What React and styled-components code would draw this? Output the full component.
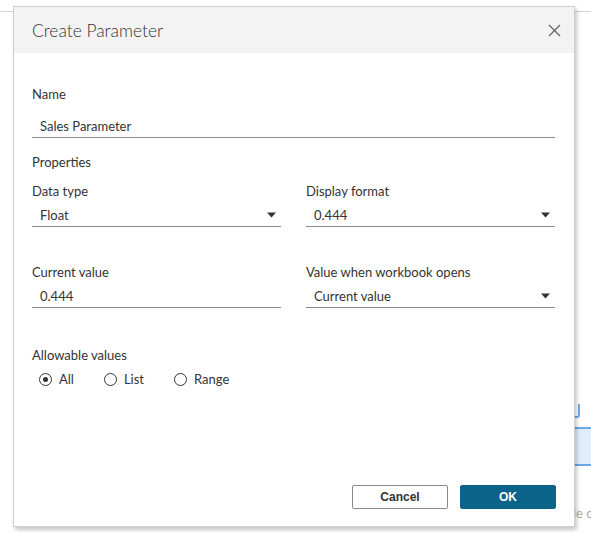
import React from 'react';
import styled, { createGlobalStyle } from 'styled-components';

const GlobalStyle = createGlobalStyle`
  html, body {
    margin: 0;
    padding: 0;
    background: #fff;
  }
  body {
    font-family: Lato, "Open Sans", sans-serif;
    color: #333;
  }
`;

const Page = styled.div`
  position: relative;
  width: 591px;
  height: 539px;
  overflow: hidden;
  background: #fff;
`;

// page content peeking out behind the modal
const TopRule = styled.div`
  height: 11px;
  border-bottom: 1px solid #d4d4d4;
`;

const BackHook = styled.div`
  position: absolute;
  left: 572px;
  top: 404px;
  width: 6px;
  height: 12px;
  border: 2px solid #6ea7e6;
  border-top: none;
  border-left: none;
  border-radius: 0 0 3px 0;
`;

const BackBox = styled.div`
  position: absolute;
  left: 560px;
  top: 427px;
  width: 60px;
  height: 35px;
  background: #e1ecfc;
  border: 2px solid #6ea7e6;
`;

const BackText = styled.div`
  position: absolute;
  left: 573px;
  top: 505px;
  font-size: 13px;
  color: #aaa;
  white-space: nowrap;
`;

const Dialog = styled.div`
  position: absolute;
  left: 13px;
  top: 6px;
  width: 560px;
  height: 519px;
  display: flex;
  flex-direction: column;
  background: #fff;
  border: 1px solid #cfcfcf;
  box-shadow: 2px 3px 4px rgba(0, 0, 0, 0.22);
`;

const Header = styled.div`
  height: 46px;
  flex: none;
  display: flex;
  align-items: center;
  justify-content: space-between;
  padding: 0 12px 0 18px;
  background: #f3f3f3;
`;

const Title = styled.div`
  font-size: 17.4px;
  font-weight: 300;
  color: #333;
`;

const Close = styled.button`
  width: 16px;
  height: 16px;
  padding: 0;
  border: none;
  background: none;
  display: flex;
  align-items: center;
  justify-content: center;
  cursor: pointer;
`;

const Body = styled.div`
  flex: 1;
  display: flex;
  flex-direction: column;
  padding: 33px 19px 17px 18px;
`;

const Label = styled.div`
  font-size: 13px;
  line-height: 16px;
  margin-top: ${p => p.$top || 0}px;
`;

const Field = styled.div`
  height: 23px;
  margin-top: ${p => p.$top || 4}px;
  display: flex;
  align-items: center;
  justify-content: space-between;
  padding: 0 5px 0 8px;
  border-bottom: 1px solid #8a8a8a;
  font-size: 13px;
`;

const Grid = styled.div`
  display: grid;
  grid-template-columns: 1fr 1fr;
  column-gap: 25px;
  margin-top: ${p => p.$top || 0}px;
`;

const Column = styled.div`
  display: flex;
  flex-direction: column;
`;

const Radios = styled.div`
  display: flex;
  gap: 30px;
  margin-top: 8px;
  padding-left: 7px;
  height: 16px;
  align-items: center;
`;

const Radio = styled.label`
  display: flex;
  align-items: center;
  gap: 7px;
  font-size: 13px;
`;

const Circle = styled.span`
  width: 11px;
  height: 11px;
  border: 1px solid #333;
  border-radius: 50%;
  display: flex;
  align-items: center;
  justify-content: center;
  &::after {
    content: '';
    width: 5px;
    height: 5px;
    border-radius: 50%;
    background: ${p => (p.$on ? '#333' : 'transparent')};
  }
`;

const Footer = styled.div`
  margin-top: auto;
  margin-right: -1px;
  display: flex;
  justify-content: flex-end;
  gap: 12px;
`;

const Button = styled.button`
  width: 96px;
  height: 24px;
  border-radius: 2px;
  font-family: "Liberation Sans", Arial, sans-serif;
  font-weight: bold;
  font-size: 12px;
  border: 1px solid ${p => (p.$primary ? '#0c6389' : '#8a8a8a')};
  background: ${p => (p.$primary ? '#0c6389' : '#fff')};
  color: ${p => (p.$primary ? '#fff' : '#333')};
`;

const Arrow = () => (
  <svg width="9" height="6" viewBox="0 0 9 6">
    <path d="M0 0.5h9L4.5 5.5z" fill="#333" />
  </svg>
);

export default function App() {
  return (
    <Page>
      <GlobalStyle />
      <TopRule />
      <BackHook />
      <BackBox />
      <BackText>ie c</BackText>
      <Dialog>
        <Header>
          <Title>Create Parameter</Title>
          <Close>
            <svg width="13" height="13" viewBox="0 0 13 13">
              <path d="M1 1L12 12M12 1L1 12" stroke="#666" strokeWidth="1.3" />
            </svg>
          </Close>
        </Header>
        <Body>
          <Label>Name</Label>
          <Field $top={12}>Sales Parameter</Field>
          <Label $top={16}>Properties</Label>
          <Grid $top={13}>
            <Column>
              <Label>Data type</Label>
              <Field>
                Float
                <Arrow />
              </Field>
            </Column>
            <Column>
              <Label>Display format</Label>
              <Field>
                0.444
                <Arrow />
              </Field>
            </Column>
          </Grid>
          <Grid $top={37}>
            <Column>
              <Label>Current value</Label>
              <Field>0.444</Field>
            </Column>
            <Column>
              <Label>Value when workbook opens</Label>
              <Field>
                Current value
                <Arrow />
              </Field>
            </Column>
          </Grid>
          <Label $top={39}>Allowable values</Label>
          <Radios>
            <Radio>
              <Circle $on />
              All
            </Radio>
            <Radio>
              <Circle />
              List
            </Radio>
            <Radio>
              <Circle />
              Range
            </Radio>
          </Radios>
          <Footer>
            <Button>Cancel</Button>
            <Button $primary>OK</Button>
          </Footer>
        </Body>
      </Dialog>
    </Page>
  );
}
